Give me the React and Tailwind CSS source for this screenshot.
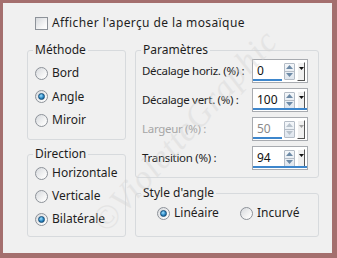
import React from 'react'

const font = { fontFamily: '"Noto Sans", "Open Sans", sans-serif' }

function Radio({ checked, label }) {
  return (
    <label className="flex items-center h-4 gap-[4px] text-[12px] text-[#1e1e1e]">
      <span className="w-[13px] h-[13px] rounded-full border border-[#8d9299] bg-[linear-gradient(135deg,#d6d9dd,#f7f7f7_70%,#ffffff)] flex items-center justify-center shrink-0">
        {checked && (
          <span className="w-[7px] h-[7px] rounded-full bg-[radial-gradient(circle_at_40%_35%,#9fe0ff,#2a87c4_55%,#0d4d7d)] border border-[#174e78]" />
        )}
      </span>
      <span>{label}</span>
    </label>
  )
}

function Group({ title, className, children }) {
  return (
    <fieldset className={`border border-[#d7dadd] rounded-[3px] px-0 ${className}`}>
      <legend className="ml-[5px] px-[2px] text-[12px] leading-4 text-[#1e1e1e]">{title}</legend>
      {children}
    </fieldset>
  )
}

function Spin({ value, bar, disabled }) {
  return (
    <div className="w-[56px] h-[24px] border border-[#a8abb0] bg-white flex items-center relative shrink-0">
      <span className={`pl-[4px] w-[31px] text-[12px] ${disabled ? 'text-[#8a8a8a]' : 'text-[#111]'}`}>{value}</span>
      <div className="w-[11px] h-[17px] border border-[#b4bcc6] rounded-[1px] flex flex-col bg-[linear-gradient(#f4f7fa,#dfe6ee)]">
        <div className="flex-1 flex items-center justify-center border-b border-[#b4bcc6]">
          <svg width="7" height="4" viewBox="0 0 7 4"><path d="M0 4 L3.5 0 L7 4Z" fill={disabled ? '#b8c2cc' : '#6d8aa6'} /></svg>
        </div>
        <div className="flex-1 flex items-center justify-center">
          <svg width="7" height="4" viewBox="0 0 7 4"><path d="M0 0 L3.5 4 L7 0Z" fill={disabled ? '#b8c2cc' : '#6d8aa6'} /></svg>
        </div>
      </div>
      <div className="ml-[2px] w-[8px] h-[19px] bg-[#f0f0f0] border-t border-l border-t-white border-l-white border-r border-b border-r-[#555] border-b-[#555] flex items-center justify-center pb-[5px]">
        <svg width="5" height="3" viewBox="0 0 5 3"><path d="M0 0 L2.5 3 L5 0Z" fill={disabled ? '#a0a0a0' : '#111'} /></svg>
      </div>
      <div className={`absolute left-0 bottom-[1px] h-[2px] bg-[#3d86cc] ${bar === 'full' ? 'w-[54px]' : 'w-[29px]'}`} />
    </div>
  )
}

function Row({ label, disabled, children }) {
  return (
    <div className="flex items-center justify-between h-6">
      <span className={`whitespace-nowrap text-[11.5px] tracking-[-0.3px] ${disabled ? 'text-[#a6a6a6]' : 'text-[#1e1e1e]'}`}>{label}</span>
      {children}
    </div>
  )
}

export default function App() {
  return (
    <div style={font} className="w-[337px] h-[258px] bg-[#a46f6e] pt-[3px] pl-[3px] pr-[5px] pb-[5px]">
      <div className="relative w-full h-full bg-[#f0f0f0] overflow-hidden">
        {/* Checkbox */}
        <div className="flex items-center h-4 mt-[12px] ml-[32px] gap-[4px]">
          <span className="w-[13px] h-[13px] border border-[#8d9299] bg-[linear-gradient(135deg,#d6d9dd,#f7f7f7_70%,#ffffff)] shrink-0" />
          <span className="text-[12px] tracking-[0.4px] text-[#1e1e1e] whitespace-nowrap">Afficher l'aperçu de la mosaïque</span>
        </div>

        <div className="flex mt-[11px] ml-[24px] gap-[9px]">
          {/* Left column */}
          <div className="w-[99px] flex flex-col gap-[6px]">
            <Group title="Méthode" className="h-[98px]">
              <div className="flex flex-col gap-[7.5px] pl-[7px] pt-[7px]">
                <Radio label="Bord" />
                <Radio label="Angle" checked />
                <Radio label="Miroir" />
              </div>
            </Group>
            <Group title="Direction" className="h-[91px]">
              <div className="flex flex-col gap-[7px] pl-[7px] pt-[3px]">
                <Radio label="Horizontale" />
                <Radio label="Verticale" />
                <Radio label="Bilatérale" checked />
              </div>
            </Group>
          </div>

          {/* Right column */}
          <div className="w-[184px] flex flex-col gap-[7px]">
            <Group title="Paramètres" className="h-[136px]">
              <div className="flex flex-col gap-[5px] pl-[6px] pr-[10px] pt-[1px]">
                <Row label="Décalage horiz. (%) :"><Spin value="0" /></Row>
                <Row label="Décalage vert. (%) :"><Spin value="100" bar="full" /></Row>
                <Row label="Largeur (%) :" disabled><Spin value="50" disabled /></Row>
                <Row label="Transition (%) :"><Spin value="94" bar="full" /></Row>
              </div>
            </Group>
            <Group title="Style d'angle" className="h-[52px]">
              <div className="flex pl-[21px] pt-[4px]">
                <div className="w-[83px]"><Radio label="Linéaire" checked /></div>
                <Radio label="Incurvé" />
              </div>
            </Group>
          </div>
        </div>

        {/* Watermark */}
        <div className="absolute left-[52px] top-[102px] -rotate-[48deg] text-[34px] italic tracking-[1px] text-[#d4d4d4] opacity-40 pointer-events-none select-none whitespace-nowrap" style={{ fontFamily: '"Liberation Serif", serif' }}>
          ©VioletteGraphic
        </div>
      </div>
    </div>
  )
}
